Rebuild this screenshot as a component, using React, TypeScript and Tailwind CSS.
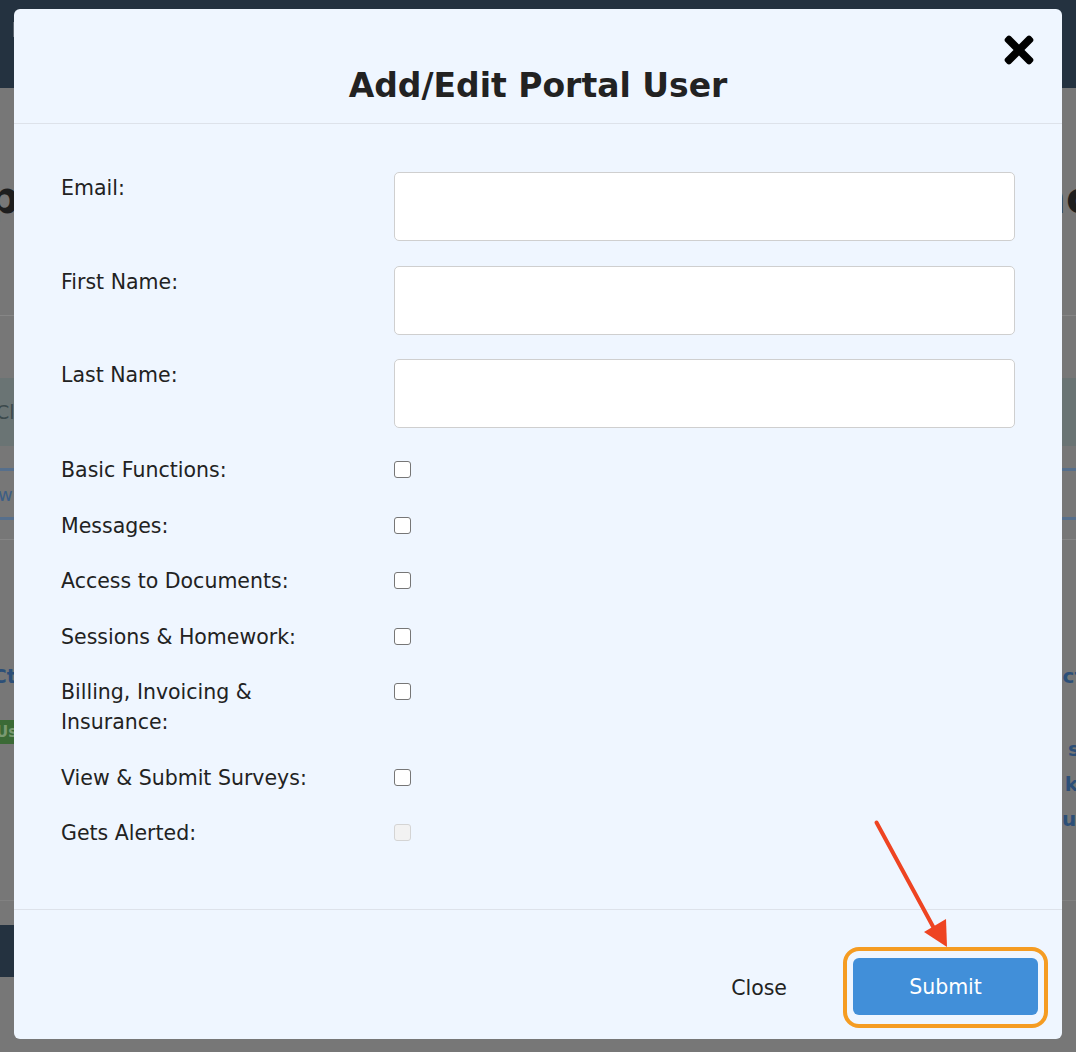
import React from "react";
import { FaTimes } from "react-icons/fa";

const font = { fontFamily: '"DejaVu Sans", "Open Sans", sans-serif' };

function TextRow({ label }: { label: React.ReactNode }) {
  return (
    <div className="flex">
      <div className="w-[333px] shrink-0 pt-[1px] text-[20.5px] leading-[30px] text-[#222]">{label}</div>
      <div className="flex-1 h-[69px] rounded-[5px] border border-[#cfcfcf] bg-white" />
    </div>
  );
}

function CheckRow({ label, disabled = false }: { label: React.ReactNode; disabled?: boolean }) {
  return (
    <div className="flex">
      <div className="w-[333px] shrink-0 pt-[1px] text-[20.5px] leading-[30px] text-[#222]">{label}</div>
      <div className="pt-[7px]">
        <div
          className={
            disabled
              ? "w-[17px] h-[17px] rounded-[3px] border border-[#d4d4d4] bg-[#f2f2f2]"
              : "w-[17px] h-[17px] rounded-[3px] border-[1.5px] border-[#767676] bg-white"
          }
        />
      </div>
    </div>
  );
}

export default function App() {
  return (
    <div className="relative w-[1076px] h-[1052px] overflow-hidden bg-[#777777]" style={font}>
      {/* dimmed background page */}
      <div className="flex flex-col w-full h-full">
        <div className="h-[88px] bg-[#243240] flex items-start pl-[13px] pt-[22px]">
          <div className="w-[4px] h-[15px] bg-[#5d6670]" />
        </div>
        <div className="h-[228px] flex items-center justify-between border-b border-[#868686] pb-[8px]">
          <span className="ml-[-12px] text-[44px] font-bold text-[#1e1e1e]">p</span>
          <span className="mr-[-16px] text-[44px] font-bold text-[#1e1e1e]">nc</span>
        </div>
        <div className="h-[62px]" />
        <div className="h-[68px] bg-[#6a7474] flex items-center">
          <span className="ml-[-4px] text-[19px] text-[#3c4a4c]">Cli</span>
        </div>
        <div className="h-[22px]" />
        <div className="h-[52px] border-t-[3px] border-b-[3px] border-[#566f8c] flex items-center">
          <span className="ml-[-2px] text-[18px] text-[#3d5e85]">w</span>
        </div>
        <div className="h-[20px] border-b border-[#858585]" />
        <div className="h-[116px]" />
        <div className="h-[40px] flex items-center justify-between">
          <span className="ml-[-8px] text-[20px] font-bold text-[#2c4f78]">Ctr</span>
          <span className="mr-[-8px] text-[20px] font-bold text-[#2c4f78]">ct</span>
        </div>
        <div className="h-[24px]" />
        <div className="flex justify-between">
          <div className="h-[24px] w-[14px] bg-[#3b6a36] text-[15px] font-bold text-[#7a9a72] leading-[24px] overflow-hidden">
            <span className="ml-[-4px]">Us</span>
          </div>
        </div>
        <div className="flex flex-col items-end mt-[-12px] text-[20px] font-bold text-[#2c4f78] leading-[35px]">
          <span className="mr-[-4px]">s</span>
          <span className="mr-[-2px]">k</span>
          <span className="mr-[-10px]">ur</span>
        </div>
        <div className="h-[64px] border-b border-[#818181]" />
        <div className="h-[24px]" />
        <div className="h-[52px] w-[14px] bg-[#243240]" />
      </div>

      {/* modal */}
      <div className="absolute left-[14px] top-[9px] w-[1048px] h-[1030px] rounded-[6px] bg-[#eff6ff] flex flex-col text-[#222]">
        <div className="relative h-[115px] shrink-0 border-b border-[#dde2ea] flex items-end justify-center pb-[17px]">
          <h1 className="text-[33px] font-bold leading-[40px] text-[#222]">Add/Edit Portal User</h1>
          <button className="absolute right-[22px] top-[20px] text-black">
            <FaTimes size={42} />
          </button>
        </div>

        <div className="flex-1 flex flex-col px-[47px] pt-[48px]">
          <div className="flex flex-col gap-[24.5px]">
            <TextRow label="Email:" />
            <TextRow label="First Name:" />
            <TextRow label="Last Name:" />
          </div>
          <div className="flex flex-col gap-[24.5px] mt-[26px]">
            <CheckRow label="Basic Functions:" />
            <CheckRow label="Messages:" />
            <CheckRow label="Access to Documents:" />
            <CheckRow label="Sessions & Homework:" />
            <CheckRow
              label={
                <>
                  Billing, Invoicing &amp;
                  <br />
                  Insurance:
                </>
              }
            />
            <CheckRow label="View & Submit Surveys:" />
            <CheckRow label="Gets Alerted:" disabled />
          </div>
        </div>

        <div className="h-[130px] shrink-0 border-t border-[#dde2ea] flex items-end justify-end pr-[24px] pb-[24px]">
          <button className="h-[57px] px-[24px] pt-[3px] text-[20.5px] text-[#222] mr-[42px]">Close</button>
          <div className="relative">
            <div className="absolute left-[-10px] right-[-10px] top-[-11px] bottom-[-13px] rounded-[16px] border-[4px] border-[#f59c22]" />
            <button className="relative w-[185px] h-[57px] pt-[2px] rounded-[6px] bg-[#418fd9] text-white text-[20.5px]">
              Submit
            </button>
          </div>
        </div>
      </div>

      {/* annotation arrow */}
      <svg className="absolute left-0 top-0 pointer-events-none" width="1076" height="1052">
        <line x1="876.5" y1="822.5" x2="936" y2="932" stroke="#ee4422" strokeWidth="4" strokeLinecap="round" />
        <polygon points="947,947 924,932 946,919" fill="#ee4422" />
      </svg>
    </div>
  );
}
